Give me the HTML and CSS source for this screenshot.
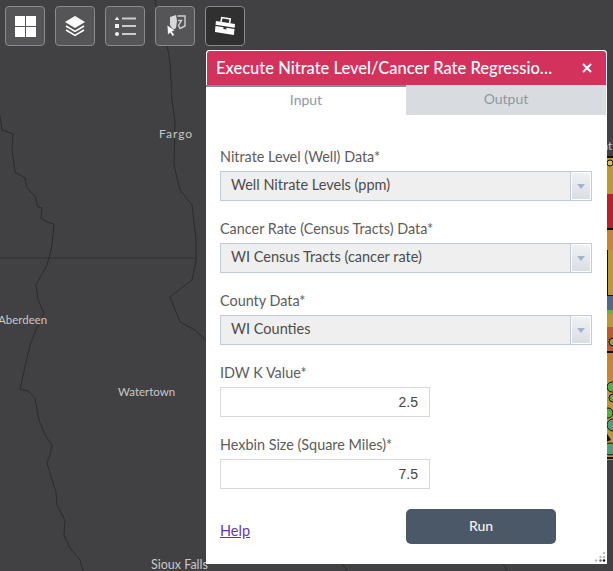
FILE: index.html
```html
<!DOCTYPE html>
<html lang="en">
<head>
<meta charset="utf-8">
<title>Nitrate Level / Cancer Rate Regression</title>
<link rel="stylesheet" href="styles.css">
</head>
<body>
<div class="map">
  <svg class="basemap" width="613" height="571" viewBox="0 0 613 571" aria-hidden="true">
    <path class="line" d="M0 258H195"/>
    <path class="river" d="M0 116L2 130L13 134L12 150L15 172L25 178L27 188L35 196L38 207L42 208L41 218L47 222L54 224L52 245L49 258L47 265L36 285L38 300L44 313L36 330L30 345L20 389L28 391L35 398L39 420L45 435L52 445L50 455L47 463L52 480L56 492L57 505L65 520L64 535L70 548L80 560L83 571"/>
    <path class="river" d="M155 0L158 15L168 50L170 63L172 100L175 122L174 165L180 190L192 205L196 240L196 260L192 280L170 297L180 322L195 330L207 342"/>
    <path class="river" d="M342 564L348 571M503 564L508 571"/>
    <g class="strip">
      <rect x="606" y="156" width="7" height="2" fill="#111"/>
      <rect x="606" y="158" width="7" height="36" fill="#bd982c"/>
      <circle cx="610" cy="163" r="3" fill="#d8c43a" stroke="#111"/>
      <rect x="606" y="194" width="7" height="34" fill="#bf1e27"/>
      <rect x="606" y="228" width="7" height="2" fill="#111"/>
      <rect x="606" y="230" width="7" height="20" fill="#c8842f"/>
      <rect x="606" y="250" width="7" height="46" fill="#bd982c"/>
      <rect x="606" y="250" width="2" height="45" fill="#111"/>
      <rect x="606" y="295" width="7" height="1" fill="#111"/>
      <rect x="606" y="296" width="7" height="14" fill="#50698a"/>
      <rect x="606" y="310" width="7" height="4" fill="#6cb33e"/>
      <rect x="606" y="314" width="7" height="13" fill="#bd982c"/>
      <rect x="606" y="327" width="7" height="24" fill="#bf5a28"/>
      <circle cx="613" cy="342" r="4" fill="#6cb33e" stroke="#111"/>
      <rect x="606" y="351" width="7" height="2" fill="#111"/>
      <rect x="606" y="353" width="7" height="27" fill="#c8842f"/>
      <rect x="606" y="380" width="7" height="80" fill="#bd982c"/>
      <circle cx="612" cy="387" r="5" fill="#58b040" stroke="#111"/>
      <circle cx="613" cy="398" r="4" fill="#58b040" stroke="#111"/>
      <circle cx="608" cy="413" r="5" fill="#58b040" stroke="#111"/>
      <circle cx="613" cy="425" r="6" fill="#4f9f78" stroke="#111"/>
      <path d="M606 432L611 440L606 442Z" fill="#111"/>
      <circle cx="610" cy="449" r="6" fill="#4f9f78" stroke="#111"/>
      <rect x="606" y="457" width="7" height="2" fill="#111"/>
    </g>
    <g class="places">
      <text class="wide" x="159" y="138">Fargo</text>
      <text x="-2" y="324">Aberdeen</text>
      <text x="118" y="396">Watertown</text>
      <text class="bigplace" x="151" y="569">Sioux Falls</text>
      <text x="599" y="150">int</text>
    </g>
  </svg>
</div>

<nav class="toolbar">
  <button class="tool" type="button" aria-label="Widgets">
    <svg width="24" height="24" viewBox="0 0 24 24"><path fill="#fff" d="M2 2h10v10H2zM13 2h10v10H13zM2 13h10v10H2zM13 13h10v10H13z"/></svg>
  </button>
  <button class="tool" type="button" aria-label="Layers">
    <svg width="24" height="24" viewBox="0 0 24 24"><path fill="#fff" d="M12 2l10 6-10 6L2 8z"/><path fill="none" stroke="#fff" stroke-width="1.6" d="M3 12l9 5.400 9-5.400M3 16l9 5.400 9-5.400"/></svg>
  </button>
  <button class="tool" type="button" aria-label="Legend">
    <svg width="24" height="24" viewBox="0 0 24 24"><path fill="#eee" d="M4 2.500l2.200 3.500H1.800zM2 10h4v4H2z"/><circle cx="4" cy="20" r="2" fill="#eee"/><path fill="none" stroke="#ccc" stroke-width="2" d="M9 4.500h14M9 12h14M9 20h14"/></svg>
  </button>
  <button class="tool" type="button" aria-label="Select">
    <svg width="24" height="24" viewBox="0 0 24 24"><path fill="#d8d8d8" d="M7 3l6-2 1 6-1 7-3 2-3-5z"/><path fill="none" stroke="#cfcfcf" stroke-width="1.400" d="M14.500 2h7.500v10l-5 2.500-1.500-3 3-5h-3.500"/><path fill="#fff" stroke="#555557" stroke-width=".6" d="M4 11l8 5.500-3 1 2.500 3.500-2 1.200-2.300-3.500L5 21z"/></svg>
  </button>
  <button class="tool tool-active" type="button" aria-label="Toolbox">
    <svg width="24" height="24" viewBox="0 0 24 24"><path fill="none" stroke="#fff" stroke-width="1.500" d="M8 8l.8-4.500 8.500 1.400-.8 4.600"/><path fill="#fff" d="M3 7l19 3-.3 3.700L2.500 10.800zM2.400 12l8 1.300v1.700l3 .5v-1.700l8.100 1.300-.6 5.900L2 18z"/></svg>
  </button>
</nav>

<section class="panel">
  <header class="panel-head">
    <h1 class="panel-title">Execute Nitrate Level/Cancer Rate Regression Analysis</h1>
    <svg class="close" width="10" height="10" viewBox="0 0 10 10" aria-label="Close"><path d="M1 1l8 8M9 1l-8 8" stroke="#fff" stroke-width="2"/></svg>
  </header>
  <div class="tabs">
    <div class="tab tab-on">Input</div>
    <div class="tab">Output</div>
  </div>
  <form class="form">
    <div class="field">
      <label class="label">Nitrate Level (Well) Data*</label>
      <div class="combo"><span class="combo-text">Well Nitrate Levels (ppm)</span><span class="combo-btn"><i class="arrow"></i></span></div>
    </div>
    <div class="field">
      <label class="label">Cancer Rate (Census Tracts) Data*</label>
      <div class="combo"><span class="combo-text">WI Census Tracts (cancer rate)</span><span class="combo-btn"><i class="arrow"></i></span></div>
    </div>
    <div class="field">
      <label class="label">County Data*</label>
      <div class="combo"><span class="combo-text">WI Counties</span><span class="combo-btn"><i class="arrow"></i></span></div>
    </div>
    <div class="field">
      <label class="label">IDW K Value*</label>
      <div class="num">2.5</div>
    </div>
    <div class="field">
      <label class="label">Hexbin Size (Square Miles)*</label>
      <div class="num">7.5</div>
    </div>
    <div class="actions">
      <a class="help" href="#">Help</a>
      <button class="run" type="button">Run</button>
    </div>
  </form>
  <svg class="grip" width="14" height="14" viewBox="0 0 14 14" aria-hidden="true">
    <g fill="#bbb"><circle cx="11" cy="3" r="1.200"/><circle cx="7.500" cy="7" r="1.200"/><circle cx="11" cy="7" r="1.200"/><circle cx="3" cy="10.500" r="1.200"/></g>
    <g fill="#666"><circle cx="7.500" cy="10.500" r="1.200"/></g><circle cx="11" cy="10.500" r="1.200" fill="#111"/>
  </svg>
</section>
</body>
</html>
```

FILE: styles.css
```css
* { box-sizing: border-box; }
html, body { margin: 0; height: 100%; }
body {
  width: 613px;
  height: 571px;
  overflow: hidden;
  position: relative;
  background: #414143;
  font-family: Lato, "Open Sans", sans-serif;
}
.map { position: absolute; inset: 0; }
.basemap { display: block; }
.river { fill: none; stroke: #2b2b2d; stroke-width: 1; }
.line { fill: none; stroke: #323234; stroke-width: 1; }
.places text {
  font-family: Lato, sans-serif;
  font-size: 11.5px;
  fill: #c8c8c8;
}
.places .wide { font-size: 12px; letter-spacing: 1px; }
.places .bigplace { font-size: 12.5px; }

.toolbar {
  position: relative;
  display: flex;
  gap: 10px;
  padding: 6px 5px;
}
.tool {
  width: 40px;
  height: 40px;
  padding: 0;
  display: flex;
  align-items: center;
  justify-content: center;
  background: #555557;
  border: 1px solid #8a8a8c;
  border-radius: 4px;
}
.tool-active { background: #303031; }

.panel {
  position: absolute;
  left: 206px;
  top: 50px;
  width: 401px;
  height: 514px;
  background: #fff;
  border-radius: 4px 4px 0 0;
  display: flex;
  flex-direction: column;
}
.panel-head {
  height: 35px;
  flex: none;
  display: flex;
  align-items: center;
  padding: 0 14px 0 9px;
  background: #d3325c;
  border-radius: 4px 4px 0 0;
  border: 1px solid #fff;
  border-bottom: 0;
}
.panel-title {
  flex: none;
  width: 339px;
  margin: 0;
  color: #fff;
  font-size: 16.5px;
  font-weight: 500;
  white-space: nowrap;
  overflow: hidden;
  text-overflow: ellipsis;
}
.close { margin-left: auto; }
.tabs {
  display: flex;
  height: 30px;
  flex: none;
  padding-right: 1px;
}
.tab {
  flex: 1;
  background: #d8dce0;
  color: #8f98a2;
  font-size: 14px;
  text-align: center;
  line-height: 28px;
}
.tab-on {
  background: #fff;
  border-top: 2px solid #7f8f9d;
  line-height: 26px;
}
.form {
  flex: 1;
  display: flex;
  flex-direction: column;
  gap: 20px;
  padding: 34px 14px 0 14px;
}
.field { display: flex; flex-direction: column; }
.label {
  height: 22px;
  line-height: 16px;
  color: #5c5c5c;
  font-size: 14.4px;
}
.combo {
  height: 30px;
  width: 372px;
  display: flex;
  background: #efefef;
  border: 1px solid #c3c9d6;
}
.combo-text {
  flex: 1;
  padding-left: 10px;
  line-height: 26px;
  font-size: 14.5px;
  color: #4c4c4c;
}
.combo-btn {
  width: 21px;
  display: flex;
  align-items: center;
  justify-content: center;
  background: linear-gradient(#f0f2f4, #d8dde2);
  border-left: 1px solid #c3c9d6;
  box-shadow: inset 0 0 0 1px #fff;
}
.arrow {
  width: 0;
  height: 0;
  border: 4px solid transparent;
  border-top: 5px solid #a4b2d0;
  border-bottom: 0;
}
.num {
  width: 210px;
  height: 30px;
  border: 1px solid #d9d9d9;
  background: #fff;
  color: #444;
  font-family: "Liberation Sans", Arial, sans-serif;
  font-size: 14px;
  line-height: 28px;
  text-align: right;
  padding-right: 11px;
}
.actions {
  position: relative;
  display: flex;
  align-items: flex-start;
  justify-content: space-between;
  padding: 0 37px 0 0;
}
.help {
  margin-top: 13px;
  color: #66399f;
  font-size: 14.5px;
}
.run {
  width: 150px;
  height: 35px;
  padding: 0 0 2px;
  border: 0;
  border-radius: 5px;
  background: #4a5868;
  color: #f2f2f2;
  font-family: inherit;
  font-size: 14px;
  font-weight: 500;
}
.grip { position: absolute; right: 0; bottom: 0; }
```
